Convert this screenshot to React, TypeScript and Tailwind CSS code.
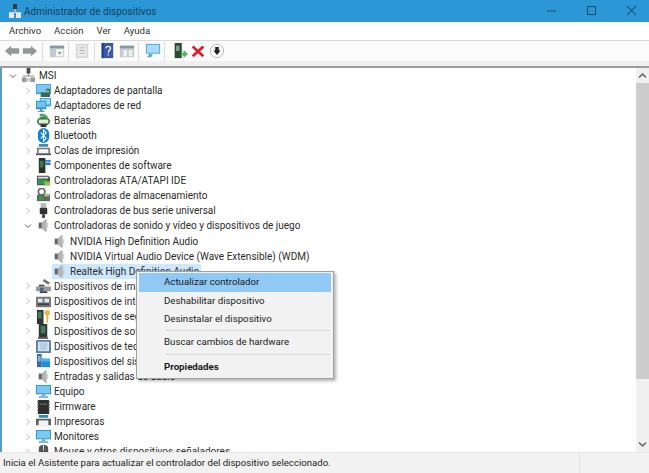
import React from "react";

type IconName =
  | "pc" | "display" | "net" | "battery" | "bt" | "printq" | "soft" | "ide" | "storage" | "usb" | "sound"
  | "camera" | "hid" | "key" | "softdev" | "mem" | "folder" | "monitor" | "firmware" | "printer" | "mouse";

function Icon({ name }: { name: IconName }) {
  const c = { width: 15, height: 15, viewBox: "0 0 16 16", className: "shrink-0" };
  switch (name) {
    case "pc":
      return <svg {...c}><rect x="6" y="0" width="4" height="6" fill="#4a4a4a" /><rect x="7.500" y="6" width="1" height="3" fill="#777" /><rect x="2" y="8" width="12" height="1" fill="#888" /><rect x="1" y="10" width="5" height="5" fill="#9a9a9a" /><rect x="10" y="10" width="5" height="5" fill="#9a9a9a" /><rect x="6" y="11" width="4" height="3" fill="#c9c9c9" /></svg>;
    case "display":
      return <svg {...c}><rect x="0" y="1" width="16" height="11" fill="#4aa4dc" /><rect x="1" y="2" width="14" height="8" fill="#7cc7ee" /><path d="M5 15 L15 15 L15 6 L11 6 L11 10 L5 10Z" fill="#356b52" /><rect x="11" y="8" width="3" height="2" fill="#8fcf7c" /></svg>;
    case "net":
      return <svg {...c}><rect x="4" y="0" width="12" height="9" fill="#3f9fd6" /><rect x="5" y="1" width="10" height="6" fill="#9bd7f2" /><rect x="0" y="3" width="11" height="9" fill="#2f93cf" /><rect x="1" y="4" width="9" height="6" fill="#6fc4ea" /><rect x="4" y="12" width="3" height="2" fill="#5a8aa4" /><rect x="2" y="14" width="7" height="1" fill="#5a8aa4" /></svg>;
    case "battery":
      return <svg {...c}><ellipse cx="8" cy="9" rx="7" ry="5" fill="#3d7d46" /><rect x="3" y="7" width="10" height="4" fill="#dfe8dc" /><path d="M4 1 C8 0 13 2 13 6 L11 6 C10 4 7 3 4 4Z" fill="#58a05e" /><rect x="5" y="12" width="6" height="3" fill="#333" /></svg>;
    case "bt":
      return <svg {...c}><rect x="2" y="0" width="12" height="16" rx="6" fill="#0f7fdc" /><path d="M5 5 L11 11 L8 14 L8 2 L11 5 L5 11" fill="none" stroke="#fff" strokeWidth="1.2" /></svg>;
    case "printq":
      return <svg {...c}><rect x="3" y="1" width="10" height="3" fill="#3d8fa8" /><path d="M1 5 H15 V11 H13 V7 H3 V11 H1Z" fill="#7a7a7a" /><rect x="3" y="7" width="10" height="5" fill="#f4f4f4" /><rect x="0" y="11" width="16" height="2" fill="#555" /></svg>;
    case "soft":
      return <svg {...c}><rect x="3" y="0" width="7" height="16" fill="#2f2f2f" /><rect x="4" y="3" width="4" height="7" fill="#2e7d4a" /><rect x="10" y="2" width="2.500" height="2.500" fill="#1e78c8" /><rect x="13" y="2" width="2.500" height="2.500" fill="#1e78c8" /><rect x="10" y="5" width="5.500" height="2.500" fill="#1e78c8" /></svg>;
    case "ide":
      return <svg {...c}><path d="M1 3 H13 L15 5 V13 H1Z" fill="#4d4d4d" /><rect x="2" y="4" width="11" height="2" fill="#ddd" /><rect x="2" y="7" width="10" height="5" fill="#2e9a52" /><rect x="9" y="9" width="6" height="4" fill="#8cc63f" /></svg>;
    case "storage":
      return <svg {...c}><circle cx="6" cy="4" r="3.500" fill="none" stroke="#666" strokeWidth="1.800" /><rect x="1" y="7" width="14" height="7" fill="#5d6b5d" /><rect x="3" y="9" width="5" height="4" fill="#2e9a52" /><rect x="9" y="6" width="5" height="3" fill="#9cc97b" /></svg>;
    case "usb":
      return <svg {...c}><rect x="5" y="0" width="6" height="5" fill="#bbb" /><rect x="4" y="5" width="8" height="7" rx="1" fill="#333" /><rect x="6.500" y="12" width="3" height="4" fill="#444" /></svg>;
    case "sound":
      return <svg {...c}><path d="M3 5 H6 L11 1 V15 L6 11 H3Z" fill="#8c8c8c" /><path d="M6 5 L11 1 V15 L6 11Z" fill="#b4b4b4" /><rect x="3" y="5" width="3" height="6" fill="#666" /><rect x="12" y="5" width="1" height="6" fill="#c0c0c0" /></svg>;
    case "camera":
      return <svg {...c}><path d="M9 0 L15 4 L13 6 L7 2Z" fill="#777" /><rect x="0" y="8" width="16" height="5" fill="#9a9a9a" /><rect x="3" y="6" width="6" height="2" fill="#555" /><circle cx="6" cy="11" r="2" fill="#2c6f9f" /><rect x="4" y="13" width="8" height="2" fill="#444" /></svg>;
    case "hid":
      return <svg {...c}><rect x="0" y="3" width="16" height="11" rx="1" fill="#777" /><rect x="2" y="5" width="5" height="4" fill="#dfe7f0" /><rect x="9" y="5" width="5" height="4" fill="#dfe7f0" /><rect x="2" y="10" width="12" height="2" fill="#444" /></svg>;
    case "key":
      return <svg {...c}><rect x="1" y="1" width="7" height="15" fill="#333" /><rect x="2" y="3" width="4" height="7" fill="#3a7f56" /><circle cx="12" cy="4" r="3" fill="#e6b84c" /><rect x="11" y="6" width="2" height="9" fill="#e6b84c" /></svg>;
    case "softdev":
      return <svg {...c}><rect x="3" y="0" width="9" height="15" fill="#333" /><rect x="5" y="2" width="5" height="8" fill="#3a7f56" /><rect x="2" y="14" width="11" height="2" fill="#666" /></svg>;
    case "mem":
      return <svg {...c}><rect x="0" y="1" width="16" height="14" rx="1" fill="#5d7ea0" /><rect x="2" y="3" width="12" height="10" fill="#d6e4f2" /><rect x="4" y="4" width="8" height="8" fill="#b6cde3" /></svg>;
    case "folder":
      return <svg {...c}><rect x="1" y="0" width="5" height="14" fill="#356a99" /><rect x="2" y="2" width="3" height="6" fill="#7db9e8" /><path d="M6 5 H15 V14 H6Z" fill="#1f90d8" /><rect x="6" y="5" width="9" height="3" fill="#54b2ea" /></svg>;
    case "monitor":
      return <svg {...c}><rect x="0" y="1" width="16" height="10" fill="#2f93cf" /><rect x="1" y="2" width="14" height="8" fill="#79c9f0" /><rect x="6" y="11" width="4" height="2" fill="#7a9fb5" /><rect x="3" y="13" width="10" height="2" fill="#7fb0cc" /></svg>;
    case "firmware":
      return <svg {...c}><rect x="2" y="1" width="12" height="15" fill="#2e2e2e" /><path d="M1 3 H3 M1 6 H3 M1 9 H3 M1 12 H3 M13 3 H15 M13 6 H15 M13 9 H15 M13 12 H15" stroke="#777" strokeWidth="1" /><rect x="4" y="5" width="8" height="1" fill="#777" /></svg>;
    case "printer":
      return <svg {...c}><rect x="3" y="1" width="10" height="3" fill="#2d8aa8" /><path d="M0 5 H16 V12 H13 V7 H3 V12 H0Z" fill="#5f5f5f" /><rect x="3" y="8" width="10" height="6" fill="#f2f2f2" /></svg>;
    case "mouse":
      return <svg {...c}><rect x="3" y="1" width="10" height="15" rx="4" fill="#555" /><rect x="7.500" y="1" width="1" height="6" fill="#ddd" /></svg>;
  }
}

function Chevron({ open }: { open?: boolean }) {
  return (
    <svg width="8" height="8" viewBox="0 0 8 8" className="shrink-0">
      <path d={open ? "M1 2.500 L4 5.500 L7 2.500" : "M2.500 1 L5.500 4 L2.500 7"} fill="none" stroke={open ? "#666" : "#bcbcbc"} strokeWidth="1" />
    </svg>
  );
}

function Row({ icon, text, level = 1, open, selected, noChevron }: { icon: IconName; text: string; level?: 0 | 1 | 2; open?: boolean; selected?: boolean; noChevron?: boolean }) {
  const indent = level === 0 ? "pl-[4px]" : level === 1 ? "pl-[19px]" : "pl-[35px]";
  return (
    <div className={`flex h-[15.05px] shrink-0 items-center ${indent}`}>
      <span className="flex w-[12px] shrink-0 items-center">{!noChevron && <Chevron open={open} />}</span>
      <span className={`flex h-[15px] items-center ${selected ? "bg-[#cce8ff]" : ""}`}>
        <span className="flex w-[18px] shrink-0 items-center"><Icon name={icon} /></span>
        <span className="whitespace-nowrap pr-[2px] leading-[15px]">{text}</span>
      </span>
    </div>
  );
}

function ToolIcon({ children }: { children: React.ReactNode }) {
  return <svg width="16" height="16" viewBox="0 0 18 18" className="shrink-0">{children}</svg>;
}

const Sep = () => <span className="block h-[19px] w-px shrink-0 bg-[#dcdcdc]" />;

function Toolbar() {
  return (
    <div className="flex h-[25px] shrink-0 flex-col bg-[#f0f0f0]">
      <div className="flex h-[20px] shrink-0 items-center bg-[#fbfbfb] pl-[3px]">
        <span className="flex w-[18px] justify-center"><ToolIcon><path d="M1 9 L8 3 V6 H17 V12 H8 V15Z" fill="#8f9a94" /></ToolIcon></span>
        <span className="flex w-[18px] justify-center"><ToolIcon><path d="M17 9 L10 3 V6 H1 V12 H10 V15Z" fill="#8f9a94" /></ToolIcon></span>
        <span className="ml-[3px]"><Sep /></span>
        <span className="ml-[5px] flex w-[18px] justify-center"><ToolIcon><rect x="1" y="3" width="16" height="13" fill="#c3cbd0" /><rect x="1" y="3" width="16" height="3" fill="#8899a6" /><rect x="8" y="7" width="8" height="8" fill="#f2f7ee" /><path d="M10 10 H14 L12 13Z" fill="#5aa84a" /></ToolIcon></span>
        <span className="ml-[2px]"><Sep /></span>
        <span className="ml-[4px] flex w-[18px] justify-center"><ToolIcon><rect x="2" y="1" width="14" height="16" fill="#d8d8d8" /><rect x="4" y="3" width="10" height="12" fill="#ededed" /><rect x="6" y="5" width="6" height="1" fill="#aaa" /><rect x="6" y="8" width="6" height="1" fill="#aaa" /><rect x="6" y="11" width="6" height="1" fill="#aaa" /></ToolIcon></span>
        <span className="ml-[3px]"><Sep /></span>
        <span className="ml-[3px] flex w-[18px] justify-center"><ToolIcon><rect x="3" y="0" width="13" height="17" fill="#3a58b0" /><rect x="3" y="0" width="2" height="17" fill="#1f3a86" /><path d="M8 6 C8 3 13 3 13 6 C13 8 10.500 8 10.500 11" fill="none" stroke="#fff" strokeWidth="1.500" /><rect x="9.800" y="12.500" width="1.500" height="1.500" fill="#fff" /></ToolIcon></span>
        <span className="ml-[2px] flex w-[18px] justify-center"><ToolIcon><rect x="1" y="3" width="16" height="13" fill="#c3cbd0" /><rect x="1" y="3" width="16" height="3" fill="#8899a6" /><rect x="5" y="8" width="4" height="7" fill="#eef2ee" /><rect x="11" y="8" width="4" height="7" fill="#eef2ee" /></ToolIcon></span>
        <span className="ml-[2px]"><Sep /></span>
        <span className="ml-[5px] flex w-[18px] justify-center"><ToolIcon><rect x="1" y="1" width="16" height="11" fill="#4aa4dc" /><rect x="2" y="2" width="14" height="9" fill="#a8dcf4" /><path d="M5 12 H9 L7 16 H2Z" fill="#6aa8c8" /></ToolIcon></span>
        <span className="ml-[2px]"><Sep /></span>
        <span className="ml-[6px] flex w-[18px] justify-center"><ToolIcon><rect x="3" y="0" width="8" height="17" fill="#2c4a33" /><rect x="4.500" y="3" width="4" height="6" fill="#7e9d84" /><path d="M10 11 H13 V8 L18 12.500 L13 17 V14 H10Z" fill="#52b560" /></ToolIcon></span>
        <span className="flex w-[18px] justify-center"><ToolIcon><path d="M3 4 L15 15 M15 4 L3 15" stroke="#dc1c26" strokeWidth="3" /></ToolIcon></span>
        <span className="ml-[1px] flex w-[18px] justify-center"><ToolIcon><circle cx="9" cy="9" r="7.500" fill="#fafafa" stroke="#b5b5b5" /><path d="M7 4.500 H11 V8.500 H13 L9 13.500 L5 8.500 H7Z" fill="#222" /></ToolIcon></span>
      </div>
    </div>
  );
}

function MenuItem({ text, active, bold }: { text: string; active?: boolean; bold?: boolean }) {
  return (
    <div className={`mx-[2px] flex h-[18px] items-center pl-[25px] ${active ? "h-[19px] bg-[#90c8f6]" : ""} ${bold ? "font-bold" : ""}`}>
      {text}
    </div>
  );
}

function ContextMenu() {
  return (
    <div className="absolute left-[136px] top-[271px] w-[198px] border border-[#a0a0a0] bg-[#f2f2f2] pt-px text-[9.7px] text-[#1a1a1a] shadow-[2px_2px_3px_rgba(0,0,0,0.3)]">
      <MenuItem text="Actualizar controlador" active />
      <MenuItem text="Deshabilitar dispositivo" />
      <MenuItem text="Desinstalar el dispositivo" />
      <div className="ml-[28px] mr-[2px] mt-[2px] h-px bg-[#d7d7d7]" />
      <div className="mt-[2px]"><MenuItem text="Buscar cambios de hardware" /></div>
      <div className="ml-[28px] mr-[2px] mt-[3px] h-px bg-[#d7d7d7]" />
      <div className="mb-[2px] mt-[3px]"><MenuItem text="Propiedades" bold /></div>
    </div>
  );
}

function Scrollbar() {
  return (
    <div className="flex w-[13px] shrink-0 flex-col bg-[#f0f0f0]">
      <div className="flex h-[15px] shrink-0 items-center justify-center">
        <svg width="9" height="7" viewBox="0 0 9 7"><path d="M1 5.500 L4.500 2 L8 5.500" fill="none" stroke="#606060" strokeWidth="1.500" /></svg>
      </div>
      <div className="h-[296px] shrink-0 bg-[#cdcdcd]" />
      <div className="flex-1" />
      <div className="flex h-[15px] shrink-0 items-center justify-center">
        <svg width="9" height="7" viewBox="0 0 9 7"><path d="M1 1.500 L4.500 5 L8 1.500" fill="none" stroke="#606060" strokeWidth="1.500" /></svg>
      </div>
    </div>
  );
}

export default function App() {
  return (
    <div className="relative flex h-[473px] w-[649px] flex-col overflow-hidden bg-white text-[10px] text-[#2b2b2b] [font-family:Roboto,'Open_Sans',sans-serif]">
      <div className="flex h-[22px] shrink-0 items-center bg-[#2b97d6]">
        <span className="ml-[8px] flex w-[14px] justify-center">
          <svg width="14" height="15" viewBox="0 0 14 15"><rect x="5" y="0" width="4" height="5" fill="#3a3a3a" /><rect x="6.500" y="5" width="1" height="3" fill="#ddd" /><rect x="1" y="9" width="5" height="5" fill="#e8e8e8" /><rect x="8" y="9" width="5" height="5" fill="#e8e8e8" /><rect x="1" y="8" width="12" height="1" fill="#cfcfcf" /></svg>
        </span>
        <span className="ml-[2px] text-[#163f5c]">Administrador de dispositivos</span>
        <span className="flex-1" />
        <svg width="12" height="12" viewBox="0 0 12 12" className="mr-[28px]"><path d="M1 6 H10" stroke="#1d5a84" strokeWidth="1.200" /></svg>
        <svg width="12" height="12" viewBox="0 0 12 12" className="mr-[28px]"><rect x="1.500" y="1.500" width="8" height="8" fill="none" stroke="#1d4f74" strokeWidth="1.100" /></svg>
        <svg width="12" height="12" viewBox="0 0 12 12" className="mr-[11px]"><path d="M1 1 L10 10 M10 1 L1 10" stroke="#1d5a84" strokeWidth="1.200" /></svg>
      </div>

      <div className="flex h-[18px] shrink-0 items-center gap-[13px] bg-white pl-[9px] text-[9.6px] text-[#333]">
        <span>Archivo</span>
        <span>Acción</span>
        <span>Ver</span>
        <span>Ayuda</span>
      </div>
      <div className="h-px shrink-0 bg-[#dadada]" />

      <Toolbar />
      <div className="h-[2px] shrink-0 bg-[#9b9b9b]" />

      <div className="flex min-h-0 flex-1 border-l-[2px] border-[#5b9cc7]">
        <div className="flex min-w-0 flex-1 flex-col overflow-hidden pl-[3px]">
          <Row icon="pc" text="MSI" level={0} open />
          <Row icon="display" text="Adaptadores de pantalla" />
          <Row icon="net" text="Adaptadores de red" />
          <Row icon="battery" text="Baterías" />
          <Row icon="bt" text="Bluetooth" />
          <Row icon="printq" text="Colas de impresión" />
          <Row icon="soft" text="Componentes de software" />
          <Row icon="ide" text="Controladoras ATA/ATAPI IDE" />
          <Row icon="storage" text="Controladoras de almacenamiento" />
          <Row icon="usb" text="Controladoras de bus serie universal" />
          <Row icon="sound" text="Controladoras de sonido y vídeo y dispositivos de juego" open />
          <Row icon="sound" text="NVIDIA High Definition Audio" level={2} noChevron />
          <Row icon="sound" text="NVIDIA Virtual Audio Device (Wave Extensible) (WDM)" level={2} noChevron />
          <Row icon="sound" text="Realtek High Definition Audio" level={2} noChevron selected />
          <Row icon="camera" text="Dispositivos de imagen" />
          <Row icon="hid" text="Dispositivos de interfaz de usuario (HID)" />
          <Row icon="key" text="Dispositivos de seguridad" />
          <Row icon="softdev" text="Dispositivos de software" />
          <Row icon="mem" text="Dispositivos de tecnología de memoria" />
          <Row icon="folder" text="Dispositivos del sistema" />
          <Row icon="sound" text="Entradas y salidas de audio" />
          <Row icon="monitor" text="Equipo" />
          <Row icon="firmware" text="Firmware" />
          <Row icon="printer" text="Impresoras" />
          <Row icon="monitor" text="Monitores" />
          <Row icon="mouse" text="Mouse y otros dispositivos señaladores" />
        </div>
        <Scrollbar />
      </div>

      <div className="flex h-[21px] shrink-0 items-center justify-between border-t border-[#e6e6e6] bg-[#f2f2f2] pl-[3px] text-[9.6px] text-[#222]">
        <span>Inicia el Asistente para actualizar el controlador del dispositivo seleccionado.</span>
        <span className="mr-[69px] h-full w-px bg-[#e4e4e4]" />
      </div>

      <ContextMenu />
    </div>
  );
}
